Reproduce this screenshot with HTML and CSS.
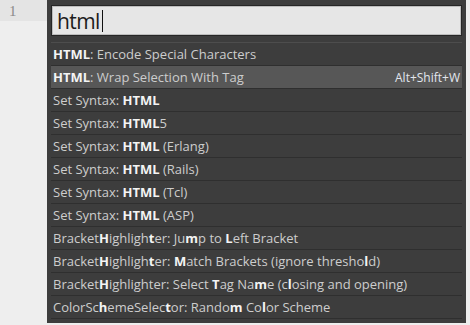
FILE: index.html
```html
<!DOCTYPE html>
<html>
<head>
<meta charset="utf-8">
<link rel="stylesheet" href="styles.css">
</head>
<body>
<div class="editor">
  <div class="gutter">
    <div class="line current">1</div>
  </div>
  <div class="palette">
    <div class="search"><span class="query">html</span><span class="caret"></span></div>
    <ul class="results">
      <li class="item"><span class="label"><b>HTML</b>: Encode Special Characters</span></li>
      <li class="item selected"><span class="label"><b>HTML</b>: Wrap Selection With Tag</span><span class="keys">Alt+Shift+W</span></li>
      <li class="item"><span class="label">Set Syntax: <b>HTML</b></span></li>
      <li class="item"><span class="label">Set Syntax: <b>HTML</b>5</span></li>
      <li class="item"><span class="label">Set Syntax: <b>HTML</b> (Erlang)</span></li>
      <li class="item"><span class="label">Set Syntax: <b>HTML</b> (Rails)</span></li>
      <li class="item"><span class="label">Set Syntax: <b>HTML</b> (Tcl)</span></li>
      <li class="item"><span class="label">Set Syntax: <b>HTML</b> (ASP)</span></li>
      <li class="item"><span class="label">Bracket<b>H</b>ighligh<b>t</b>er: Ju<b>m</b>p to <b>L</b>eft Bracket</span></li>
      <li class="item"><span class="label">Bracket<b>H</b>ighligh<b>t</b>er: <b>M</b>atch Brackets (ignore thresho<b>l</b>d)</span></li>
      <li class="item"><span class="label">Bracket<b>H</b>ighlighter: Select <b>T</b>ag Na<b>m</b>e (c<b>l</b>osing and opening)</span></li>
      <li class="item"><span class="label">ColorSc<b>h</b>emeSelec<b>t</b>or: Rando<b>m</b> Co<b>l</b>or Scheme</span></li>
    </ul>
  </div>
</div>
</body>
</html>
```
FILE: styles.css
```css
html, body {
  margin: 0;
  padding: 0;
  background: #eeeeee;
}
.editor {
  display: flex;
  align-items: flex-start;
  width: 470px;
  height: 325px;
  background: #eeeeee;
}
.gutter {
  width: 47px;
  flex: none;
}
.line {
  height: 21px;
  box-sizing: border-box;
  padding: 3px 0 0 9px;
  font-family: "Liberation Serif", serif;
  font-size: 15px;
  line-height: 16px;
  color: #8a8a8a;
}
.line.current {
  background: #e4e4e4;
}
.palette {
  width: 419px;
  flex: none;
  background: #3d3d3d;
  padding: 5px 4px 4px 4px;
  box-sizing: border-box;
}
.search {
  height: 31px;
  box-sizing: border-box;
  background: #e6e6e6;
  border: 1px solid #262626;
  box-shadow: inset 0 0 0 1px #bdbdbd;
  display: flex;
  align-items: center;
  padding-left: 5px;
}
.query {
  font-family: "Open Sans", sans-serif;
  font-size: 21px;
  letter-spacing: -0.6px;
  color: #1c1c1c;
  line-height: 24px;
}
.caret {
  width: 1px;
  height: 22px;
  margin-left: 2px;
  background: #111;
}
.results {
  list-style: none;
  margin: 6px 0 0 0;
  padding: 0;
  border-top: 1px solid #4d4d4d;
}
.item {
  height: 22px;
  border-bottom: 1px solid #2f2f2f;
  display: flex;
  align-items: center;
  justify-content: space-between;
  padding: 0 2px;
  font-family: "Open Sans", sans-serif;
  font-size: 13px;
  color: #cdcdcd;
  white-space: nowrap;
}
.item b {
  color: #f4f4f4;
  font-weight: 700;
}
.item.selected {
  background: #575757;
}
.keys {
  font-size: 12px;
  color: #e2e6ee;
  padding-right: 0;
}
```
